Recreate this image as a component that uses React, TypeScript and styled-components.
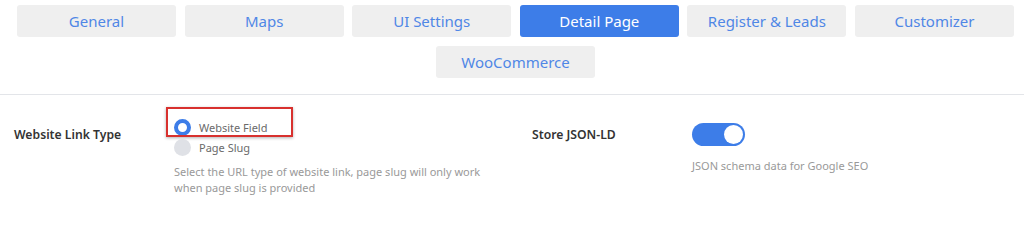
import React from 'react';
import styled, { createGlobalStyle } from 'styled-components';

const GlobalStyle = createGlobalStyle`
    body {
        margin: 0;
        background: #ffffff;
        font-family: 'Noto Sans', 'Open Sans', sans-serif;
    }
`;

const Page = styled.div`
    width: 1024px;
    height: 229px;
    overflow: hidden;
    background: #fff;
`;

const TabBar = styled.nav`
    display: flex;
    flex-wrap: wrap;
    justify-content: center;
    column-gap: 8.6px;
    row-gap: 9px;
    padding: 5px 8px 16px 15px;
    border-bottom: 1px solid #e3e5e9;
`;

const Tab = styled.button<{ $active?: boolean }>`
    width: 159px;
    height: 32px;
    border: 0;
    border-radius: 3px;
    background: ${(p) => (p.$active ? '#3d7de8' : '#efefef')};
    color: ${(p) => (p.$active ? '#ffffff' : '#4f87e6')};
    font-family: inherit;
    font-size: 15px;
    cursor: pointer;
    padding: 0;
`;

const Settings = styled.section`
    display: grid;
    grid-template-columns: 518px 1fr;
    padding: 22px 0 0 14px;
`;

const Field = styled.div`
    display: grid;
    grid-template-columns: 160px 1fr;
    align-items: start;
`;

const Label = styled.div<{ $top: number }>`
    padding-top: ${(p) => p.$top}px;
    font-size: 12.2px;
    font-weight: 600;
    color: #333;
`;

const Control = styled.div`
    display: flex;
    flex-direction: column;
`;

const Option = styled.label`
    position: relative;
    display: flex;
    align-items: center;
    gap: 8px;
    height: 20px;
    font-size: 11px;
    color: #6a6a6a;
`;

const Radio = styled.span<{ $checked?: boolean }>`
    box-sizing: border-box;
    width: 17px;
    height: 17px;
    border-radius: 50%;
    background: ${(p) => (p.$checked ? '#fff' : '#dfe1e6')};
    border: ${(p) => (p.$checked ? '4px solid #3d7de8' : '0')};
`;

const Highlight = styled.span`
    position: absolute;
    left: -8px;
    top: -10px;
    width: 127px;
    height: 30px;
    box-sizing: border-box;
    border: 2px solid #d8312e;
    box-shadow: 0 1px 3px rgba(0, 0, 0, 0.3);
    pointer-events: none;
`;

const Hint = styled.p<{ $top: number }>`
    margin: ${(p) => p.$top}px 0 0;
    width: 320px;
    font-size: 11px;
    line-height: 16px;
    color: #999;
`;

const Switch = styled.span`
    display: flex;
    justify-content: flex-end;
    align-items: center;
    width: 53px;
    height: 23px;
    box-sizing: border-box;
    padding: 2px;
    border-radius: 12px;
    background: #3d7de8;
    margin-top: 6px;
`;

const Knob = styled.span`
    width: 19px;
    height: 19px;
    border-radius: 50%;
    background: #fff;
`;

const tabs = ['General', 'Maps', 'UI Settings', 'Detail Page', 'Register & Leads', 'Customizer', 'WooCommerce'];

export default function App() {
    return (
        <Page>
            <GlobalStyle />
            <TabBar>
                {tabs.map((t) => (
                    <Tab key={t} $active={t === 'Detail Page'}>
                        {t}
                    </Tab>
                ))}
            </TabBar>
            <Settings>
                <Field>
                    <Label $top={9}>Website Link Type</Label>
                    <Control>
                        <Option>
                            <Radio $checked />
                            Website Field
                            <Highlight />
                        </Option>
                        <Option>
                            <Radio />
                            Page Slug
                        </Option>
                        <Hint $top={7}>
                            Select the URL type of website link, page slug will only work when page slug is provided
                        </Hint>
                    </Control>
                </Field>
                <Field>
                    <Label $top={9}>Store JSON-LD</Label>
                    <Control>
                        <Switch>
                            <Knob />
                        </Switch>
                        <Hint $top={12}>JSON schema data for Google SEO</Hint>
                    </Control>
                </Field>
            </Settings>
        </Page>
    );
}
